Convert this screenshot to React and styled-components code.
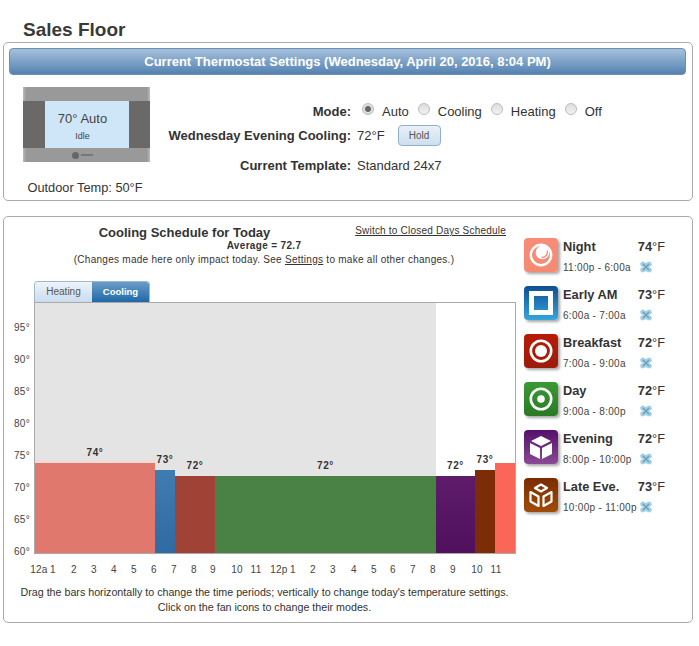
import styled, { createGlobalStyle } from "styled-components";

const GlobalStyle = createGlobalStyle`
  html, body {
    margin: 0;
    padding: 0;
    background: #fff;
    font-family: "Liberation Sans", Arial, sans-serif;
    color: #333;
  }
`;

const Page = styled.div`
  width: 699px;
  height: 646px;
  overflow: hidden;
  padding: 20px 6px 0 3px;
  box-sizing: border-box;
`;

const Title = styled.h1`
  margin: 0 0 0 20px;
  height: 22px;
  font-size: 19px;
  line-height: 20px;
  font-weight: 700;
  color: #3a3a3a;
`;

const Panel = styled.section`
  border: 1px solid #aaa;
  border-radius: 5px;
  box-sizing: border-box;
  width: 690px;
`;

const SettingsPanel = styled(Panel)`
  height: 159px;
  padding: 5px;
`;

const HeaderBar = styled.div`
  height: 27px;
  width: 677px;
  box-sizing: border-box;
  border: 1px solid #6c8fb5;
  border-radius: 4px;
  background: linear-gradient(#a6c0dc, #5482b0);
  color: #fff;
  font-size: 13px;
  font-weight: 700;
  line-height: 25px;
  text-align: center;
`;

const SettingsBody = styled.div`
  display: flex;
  padding: 12px 0 0 14px;
`;

const ThermoColumn = styled.div`
  width: 127px;
  text-align: center;
  color: #333;
`;

const Thermostat = styled.div`
  width: 127px;
  height: 75px;
  display: flex;
  flex-direction: column;
  background: linear-gradient(90deg, #bbb 0, #999 3px, #999 124px, #bbb 127px);
`;

const ThermoFace = styled.div`
  margin-top: 14px;
  height: 47px;
  display: flex;
  justify-content: center;
  background: linear-gradient(90deg, #6b6868 22px, transparent 22px, transparent 105px, #6b6868 105px);
`;

const ThermoScreen = styled.div`
  width: 84px;
  height: 47px;
  background: #cfe6f9;
  color: #444;
  font-size: 13px;
  line-height: 17px;
  padding: 9px 8px 0 0;
  box-sizing: border-box;
  small {
    display: block;
    margin-top: 2px;
    font-size: 9px;
    line-height: 14px;
  }
`;

const ThermoLogo = styled.div`
  flex: 1;
  display: flex;
  align-items: center;
  justify-content: center;
  gap: 2px;
  padding-right: 8px;
  i {
    width: 7px;
    height: 7px;
    border-radius: 50%;
    background: #666;
  }
  b {
    width: 12px;
    height: 2px;
    background: #777;
  }
`;

const Outdoor = styled.div`
  margin: 19px 0 0 -3px;
  font-size: 12.8px;
  line-height: 14px;
  white-space: nowrap;
`;

const SettingsGrid = styled.div`
  margin: 12px 0 0 17px;
  display: grid;
  grid-template-columns: 184px 1fr;
  grid-template-rows: 24px 24px 36px;
  column-gap: 6px;
  align-items: center;
`;

const Label = styled.div`
  text-align: right;
  font-weight: 700;
  color: #333;
  font-size: 13px;
  white-space: nowrap;
`;

const Value = styled.div`
  display: flex;
  align-items: center;
  font-size: 13px;
  color: #333;
`;

const ModeValue = styled(Value)`
  padding-left: 5px;
`;

const Radio = styled.span`
  width: 10px;
  height: 10px;
  flex: none;
  border-radius: 50%;
  border: 1px solid #bbb;
  background: ${(p) =>
    p.$on
      ? "radial-gradient(circle, #666 0 2.5px, #ddd 3.5px)"
      : "linear-gradient(#ddd, #f2f2f2)"};
  margin: -4px 8px 0 0;
`;

const RadioText = styled.span`
  margin-right: 9px;
`;

const HoldButton = styled.button`
  width: 43px;
  height: 21px;
  margin-left: 13px;
  padding: 0;
  border: 1px solid #8fb0cc;
  border-radius: 4px;
  background: linear-gradient(#e9f0f7, #cfdfee);
  color: #555;
  font-family: inherit;
  font-size: 10px;
`;

const SchedulePanel = styled(Panel)`
  height: 407px;
  margin-top: 15px;
  display: flex;
`;

const ScheduleMain = styled.div`
  width: 513px;
  flex: none;
`;

const ScheduleHead = styled.div`
  height: 59px;
  position: relative;
  text-align: center;
  padding-top: 8px;
  box-sizing: border-box;
  width: 513px;
`;

const ScheduleTitle = styled.div`
  width: 361px;
  font-size: 13px;
  font-weight: 700;
  line-height: 15px;
  color: #333;
`;

const Average = styled.div`
  margin-left: 7px;
  font-size: 10px;
  font-weight: 700;
  line-height: 11px;
  letter-spacing: 0.34px;
`;

const Note = styled.div`
  margin: 3px 0 0 7px;
  font-size: 10px;
  line-height: 12px;
  letter-spacing: 0.27px;
`;

const SwitchLink = styled.a`
  position: absolute;
  top: 8px;
  right: 11px;
  font-size: 10px;
  letter-spacing: 0.21px;
  color: #333;
  text-decoration: underline;
`;

const Tabs = styled.div`
  display: flex;
  margin: 5px 0 0 30px;
  width: 116px;
  height: 21px;
  border: 1px solid #9fb8d0;
  border-bottom: none;
  border-radius: 4px 4px 0 0;
  overflow: hidden;
  box-sizing: border-box;
`;

const Tab = styled.div`
  flex: 1;
  text-align: center;
  line-height: 20px;
  ${(p) =>
    p.$active
      ? "background: linear-gradient(#6b9cc7, #1f68a8); color: #fff; font-weight: 700; font-size: 9.5px;"
      : "background: linear-gradient(#eef4fa, #c9dcee); color: #555; font-size: 10px;"}
`;

const ChartRow = styled.div`
  display: flex;
`;

const YAxis = styled.div`
  width: 20px;
  flex: none;
  margin-left: 10px;
  height: 252px;
  display: flex;
  flex-direction: column;
  gap: 18px;
  padding-top: 19px;
  font-size: 10px;
  line-height: 14px;
  letter-spacing: 0.3px;
  color: #444;
  box-sizing: border-box;
`;

const Chart = styled.div`
  width: 482px;
  height: 252px;
  flex: none;
  box-sizing: border-box;
  border: 1px solid #aaa;
  background: linear-gradient(90deg, #e4e4e4 401px, #fff 401px);
  display: flex;
  align-items: flex-end;
`;

const Bar = styled.div`
  position: relative;
  flex: none;
  width: ${(p) => p.$w}px;
  height: ${(p) => p.$h}px;
  background: ${(p) => p.$bg};
  ${(p) => p.$cap && "box-shadow: 0 -3px 0 #efdcd9;"}
`;

const BarLabel = styled.span`
  position: absolute;
  left: 0;
  right: 0;
  top: -16px;
  text-align: center;
  font-size: 10px;
  font-weight: 700;
  letter-spacing: 0.6px;
  line-height: 12px;
  color: #333;
`;

const XAxis = styled.div`
  display: flex;
  margin: 10px 0 0 25px;
  font-size: 10px;
  line-height: 12px;
  color: #444;
  letter-spacing: 0.2px;
`;

const Tick = styled.span`
  width: 20px;
  flex: none;
  text-align: center;
  margin-left: ${(p) => p.$gap}px;
`;

const Hint = styled.div`
  margin-top: 9px;
  padding-left: 8px;
  text-align: center;
  font-size: 10.7px;
  line-height: 15px;
  color: #333;
  white-space: nowrap;
`;

const Legend = styled.div`
  padding-top: 21px;
  margin-left: 7px;
  display: flex;
  flex-direction: column;
  gap: 13px;
`;

const LegendItem = styled.div`
  display: flex;
  height: 35px;
`;

const IconTile = styled.div`
  width: 34px;
  height: 34px;
  flex: none;
  border-radius: 4px;
  background: linear-gradient(${(p) => p.$from}, ${(p) => p.$to});
  box-shadow: 2px 2px 3px rgba(0, 0, 0, 0.35);
  display: flex;
  align-items: center;
  justify-content: center;
`;

const LegendText = styled.div`
  margin-left: 5px;
  padding-top: 1px;
  width: 110px;
`;

const LegendTop = styled.div`
  display: flex;
  justify-content: space-between;
  padding-right: 8px;
  font-size: 12.8px;
  line-height: 16px;
  color: #333;
  font-weight: 700;
  span { font-weight: 400; }
`;

const LegendBottom = styled.div`
  margin-top: 7px;
  display: flex;
  align-items: center;
  font-size: 10px;
  line-height: 12px;
  letter-spacing: 0.3px;
  color: #444;
  white-space: nowrap;
`;

const LegendTime = styled.span`
  width: 77px;
`;

const FanIcon = styled.svg`
  width: 12px;
  height: 12px;
  margin-top: -2px;
`;

const Fan = () => (
  <FanIcon viewBox="0 0 12 12">
    <g fill="#a4cfe2">
      <ellipse cx="3.3" cy="3.3" rx="3.1" ry="2.5" transform="rotate(20 3.3 3.3)" />
      <ellipse cx="8.7" cy="3.3" rx="3.1" ry="2.5" transform="rotate(-20 8.7 3.3)" />
      <ellipse cx="3.3" cy="8.7" rx="3.1" ry="2.5" transform="rotate(-20 3.3 8.7)" />
      <ellipse cx="8.7" cy="8.7" rx="3.1" ry="2.5" transform="rotate(20 8.7 8.7)" />
    </g>
    <path d="M3 3l6 6M9 3l-6 6" stroke="#5c9fbe" strokeWidth="1.2" />
  </FanIcon>
);

const NightIcon = () => (
  <svg width="26" height="26" viewBox="0 0 26 26">
    <circle cx="13" cy="13" r="10.2" fill="none" stroke="#fff" strokeWidth="2.4" />
    <circle cx="14.5" cy="10.5" r="6.8" fill="#fff" />
    <path d="M19 8.5a5 5 0 0 1-5.5 6.8" fill="none" stroke="#f98b78" strokeWidth="1.4" />
  </svg>
);

const EarlyIcon = () => (
  <svg width="24" height="24" viewBox="0 0 24 24">
    <rect x="2.5" y="2.5" width="19" height="19" fill="none" stroke="#fff" strokeWidth="5" />
  </svg>
);

const RingIcon = ({ dot }) => (
  <svg width="26" height="26" viewBox="0 0 26 26">
    <circle cx="13" cy="13" r="10.2" fill="none" stroke="#fff" strokeWidth="2.6" />
    <circle cx="13" cy="13" r={dot ? 3.8 : 6} fill="#fff" />
  </svg>
);

const CubeIcon = () => (
  <svg width="26" height="26" viewBox="0 0 26 26" fill="#fff">
    <polygon points="13,2 23,7 13,12 3,7" />
    <polygon points="2,9 12,14 12,25 2,20" />
    <polygon points="24,9 14,14 14,25 24,20" />
  </svg>
);

const BoxesIcon = () => (
  <svg width="26" height="26" viewBox="0 0 26 26" fill="none" stroke="#fff" strokeWidth="2.2" strokeLinejoin="round">
    <polygon points="13,2.5 19,6 13,9.5 7,6" />
    <polygon points="2.5,10 10.5,14.5 10.5,24 2.5,19.5" />
    <polygon points="23.5,10 15.5,14.5 15.5,24 23.5,19.5" />
  </svg>
);

const legend = [
  { name: "Night", temp: 74, time: "11:00p - 6:00a", from: "#f98b78", to: "#f58a72", icon: <NightIcon /> },
  { name: "Early AM", temp: 73, time: "6:00a - 7:00a", from: "#0d4f93", to: "#35a6dd", icon: <EarlyIcon /> },
  { name: "Breakfast", temp: 72, time: "7:00a - 9:00a", from: "#b71c05", to: "#9c1c0c", icon: <RingIcon /> },
  { name: "Day", temp: 72, time: "9:00a - 8:00p", from: "#3a9a35", to: "#2a7a24", icon: <RingIcon dot /> },
  { name: "Evening", temp: 72, time: "8:00p - 10:00p", from: "#55106a", to: "#8a4a94", icon: <CubeIcon /> },
  { name: "Late Eve.", temp: 73, time: "10:00p - 11:00p", from: "#7a2c00", to: "#a04c08", icon: <BoxesIcon /> },
];

const bars = [
  { w: 120, h: 90, bg: "#e0786d", label: "74°", cap: true },
  { w: 20, h: 83, bg: "linear-gradient(#3f7cb0, #2f6ba3)", label: "73°" },
  { w: 40, h: 77, bg: "#a04236", label: "72°" },
  { w: 221, h: 77, bg: "#4a8246", label: "72°" },
  { w: 39, h: 77, bg: "linear-gradient(#5e1c6a, #50105e)", label: "72°" },
  { w: 20, h: 83, bg: "#7d2c08", label: "73°" },
  { w: 20, h: 90, bg: "#fa6658" },
];

// the labels are not evenly spaced in the original, gap is the nudge from 20px
const hours = [
  ["12a", 0], ["1", -6], ["2", 1], ["3", 0], ["4", 0], ["5", 0], ["6", 0], ["7", 0],
  ["8", 0], ["9", -1], ["10", 4], ["11", -1], ["12p", 3], ["1", -6], ["2", 0], ["3", 0],
  ["4", 1], ["5", 0], ["6", -1], ["7", 0], ["8", 0], ["9", 0], ["10", 4], ["11", -1],
];
const degrees = [95, 90, 85, 80, 75, 70, 65, 60];

export default function App() {
  return (
    <>
      <GlobalStyle />
      <Page>
        <Title>Sales Floor</Title>
        <SettingsPanel>
          <HeaderBar>Current Thermostat Settings (Wednesday, April 20, 2016, 8:04 PM)</HeaderBar>
          <SettingsBody>
            <ThermoColumn>
              <Thermostat>
                <ThermoFace>
                  <ThermoScreen>
                    70° Auto
                    <small>Idle</small>
                  </ThermoScreen>
                </ThermoFace>
                <ThermoLogo>
                  <i />
                  <b />
                </ThermoLogo>
              </Thermostat>
              <Outdoor>Outdoor Temp: 50°F</Outdoor>
            </ThermoColumn>
            <SettingsGrid>
              <Label>Mode:</Label>
              <ModeValue>
                <Radio $on />
                <RadioText>Auto</RadioText>
                <Radio />
                <RadioText>Cooling</RadioText>
                <Radio />
                <RadioText>Heating</RadioText>
                <Radio />
                <RadioText>Off</RadioText>
              </ModeValue>
              <Label>Wednesday Evening Cooling:</Label>
              <Value>
                72°F
                <HoldButton type="button">Hold</HoldButton>
              </Value>
              <Label>Current Template:</Label>
              <Value>Standard 24x7</Value>
            </SettingsGrid>
          </SettingsBody>
        </SettingsPanel>

        <SchedulePanel>
          <ScheduleMain>
            <ScheduleHead>
              <ScheduleTitle>Cooling Schedule for Today</ScheduleTitle>
              <Average>Average = 72.7</Average>
              <Note>
                (Changes made here only impact today. See <u>Settings</u> to make all other changes.)
              </Note>
              <SwitchLink>Switch to Closed Days Schedule</SwitchLink>
            </ScheduleHead>
            <Tabs>
              <Tab>Heating</Tab>
              <Tab $active>Cooling</Tab>
            </Tabs>
            <ChartRow>
              <YAxis>
                {degrees.map((d) => (
                  <span key={d}>{d}°</span>
                ))}
              </YAxis>
              <Chart>
                {bars.map((b, i) => (
                  <Bar key={i} $w={b.w} $h={b.h} $bg={b.bg} $cap={b.cap}>
                    {b.label && <BarLabel>{b.label}</BarLabel>}
                  </Bar>
                ))}
              </Chart>
            </ChartRow>
            <XAxis>
              {hours.map(([h, gap], i) => (
                <Tick key={i} $gap={gap}>{h}</Tick>
              ))}
            </XAxis>
            <Hint>
              Drag the bars horizontally to change the time periods; vertically to change today's temperature settings.
              <br />
              Click on the fan icons to change their modes.
            </Hint>
          </ScheduleMain>
          <Legend>
            {legend.map((l) => (
              <LegendItem key={l.name}>
                <IconTile $from={l.from} $to={l.to}>
                  {l.icon}
                </IconTile>
                <LegendText>
                  <LegendTop>
                    {l.name}
                    <div>
                      {l.temp}
                      <span>°F</span>
                    </div>
                  </LegendTop>
                  <LegendBottom>
                    <LegendTime>{l.time}</LegendTime>
                    <Fan />
                  </LegendBottom>
                </LegendText>
              </LegendItem>
            ))}
          </Legend>
        </SchedulePanel>
      </Page>
    </>
  );
}
